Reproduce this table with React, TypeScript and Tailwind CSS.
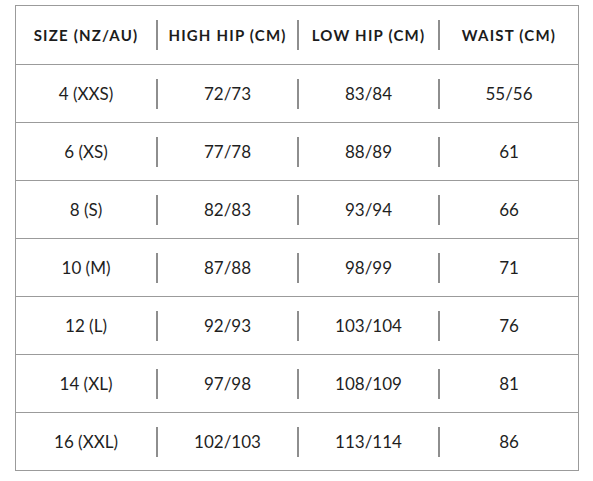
const HEADERS = ["SIZE (NZ/AU)", "HIGH HIP (CM)", "LOW HIP (CM)", "WAIST (CM)"];

const ROWS: string[][] = [
  ["4 (XXS)", "72/73", "83/84", "55/56"],
  ["6 (XS)", "77/78", "88/89", "61"],
  ["8 (S)", "82/83", "93/94", "66"],
  ["10 (M)", "87/88", "98/99", "71"],
  ["12 (L)", "92/93", "103/104", "76"],
  ["14 (XL)", "97/98", "108/109", "81"],
  ["16 (XXL)", "102/103", "113/114", "86"],
];

const WIDTHS = ["w-[140px]", "w-[139px]", "w-[139px]", "w-[138px]"];

function Sep() {
  return <div className="h-[30px] w-[2px] shrink-0 bg-[#8e8e8e]" />;
}

function Row({ cells, header }: { cells: string[]; header?: boolean }) {
  return (
    <div className={`flex items-center ${header ? "h-[58px]" : "h-[57px]"}`}>
      {cells.map((c, i) => (
        <div key={i} className="contents">
          {i > 0 && <Sep />}
          <div
            className={`${WIDTHS[i]} flex shrink-0 items-center justify-center ${
              header
                ? "text-[15px] font-bold tracking-[1.2px] text-[#1c1c1c]"
                : "text-[17px] text-[#1f1f1f]"
            }`}
          >
            {c}
          </div>
        </div>
      ))}
    </div>
  );
}

export default function App() {
  return (
    <div className="min-h-[481px] bg-white pl-[15px] pt-[5px] font-['Lato',sans-serif]">
      <div className="w-[564px] overflow-hidden border border-[#9b9b9b]">
        <Row cells={HEADERS} header />
        {ROWS.map((r, i) => (
          <div key={i} className="border-t border-[#9b9b9b]">
            <Row cells={r} />
          </div>
        ))}
      </div>
    </div>
  );
}
